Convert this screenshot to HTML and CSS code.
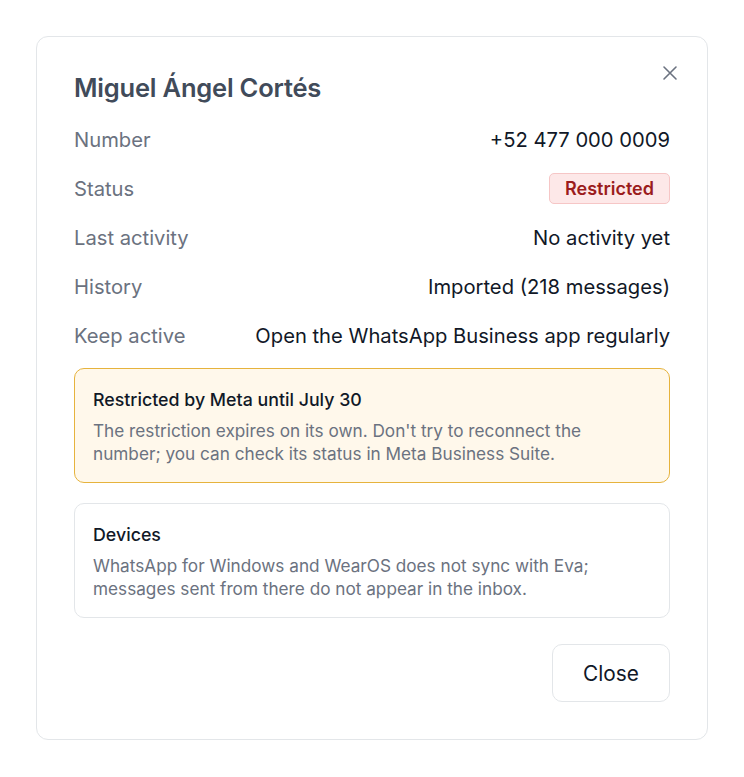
FILE: index.html
```html
<!DOCTYPE html>
<html>
<head>
<meta charset="utf-8">
<link rel="stylesheet" href="styles.css">
</head>
<body>
<div class="page">
  <div class="card">
    <button class="x" aria-label="Close">
      <svg width="16" height="16" viewBox="0 0 16 16" fill="none" stroke="#6b7280" stroke-width="1.6" stroke-linecap="round"><path d="M2 2L14 14M14 2L2 14"/></svg>
    </button>
    <h1 class="title">Miguel Ángel Cortés</h1>
    <div class="rows">
      <div class="row"><span class="label">Number</span><span class="value">+52 477 000 0009</span></div>
      <div class="row"><span class="label">Status</span><span class="badge">Restricted</span></div>
      <div class="row"><span class="label">Last activity</span><span class="value">No activity yet</span></div>
      <div class="row"><span class="label">History</span><span class="value">Imported (218 messages)</span></div>
      <div class="row"><span class="label">Keep active</span><span class="value">Open the WhatsApp Business app regularly</span></div>
    </div>
    <div class="box warn">
      <div class="box-title">Restricted by Meta until July 30</div>
      <div class="box-body">The restriction expires on its own. Don't try to reconnect the number; you can check its status in Meta Business Suite.</div>
    </div>
    <div class="box info">
      <div class="box-title">Devices</div>
      <div class="box-body">WhatsApp for Windows and WearOS does not sync with Eva; messages sent from there do not appear in the inbox.</div>
    </div>
    <div class="footer">
      <button class="btn">Close</button>
    </div>
  </div>
</div>
</body>
</html>
```
FILE: styles.css
```css
* { box-sizing: border-box; }
html, body { margin: 0; padding: 0; background: #fff; }
body { font-family: Inter, "Noto Sans", sans-serif; color: #111827; }
.page { padding: 36px; }
.card {
  position: relative;
  width: 672px;
  height: 704px;
  border: 1px solid #e3e6e9;
  border-radius: 12px;
  padding: 35px 37px 37px 37px;
  background: #fff;
}
.x {
  position: absolute;
  top: 28px;
  right: 29px;
  width: 16px;
  height: 16px;
  padding: 0;
  border: 0;
  background: none;
  display: flex;
}
.title {
  margin: 0;
  font-size: 25.5px;
  line-height: 31px;
  font-weight: 600;
  color: #414b5a;
  letter-spacing: -0.2px;
}
.rows {
  margin-top: 21px;
  display: flex;
  flex-direction: column;
  gap: 18px;
}
.row {
  height: 31px;
  display: flex;
  align-items: center;
  justify-content: space-between;
  font-size: 20.2px;
}
.label { color: #6b7280; }
.value { color: #111827; }
.badge {
  height: 31px;
  padding: 0 15px;
  display: flex;
  align-items: center;
  background: #fde8e8;
  border: 1px solid #f6c6c6;
  border-radius: 5px;
  color: #9b1c1c;
  font-weight: 600;
  font-size: 18px;
}
.box {
  border-radius: 10px;
  padding: 19px 19px 17px 18px;
}
.warn {
  margin-top: 17px;
  background: #fff8eb;
  border: 1.5px solid #e6b33d;
}
.info {
  margin-top: 20px;
  background: #fff;
  border: 1px solid #e3e6e9;
}
.box-title {
  font-size: 17.8px;
  line-height: 24px;
  font-weight: 500;
  color: #111827;
}
.box-body {
  margin-top: 7px;
  font-size: 17.2px;
  line-height: 23px;
  color: #6b7280;
}
.footer {
  margin-top: 26px;
  display: flex;
  justify-content: flex-end;
}
.btn {
  width: 118px;
  height: 58px;
  border: 1px solid #e3e6e9;
  border-radius: 10px;
  background: #fff;
  font-family: inherit;
  font-size: 20.8px;
  color: #111827;
}
```
